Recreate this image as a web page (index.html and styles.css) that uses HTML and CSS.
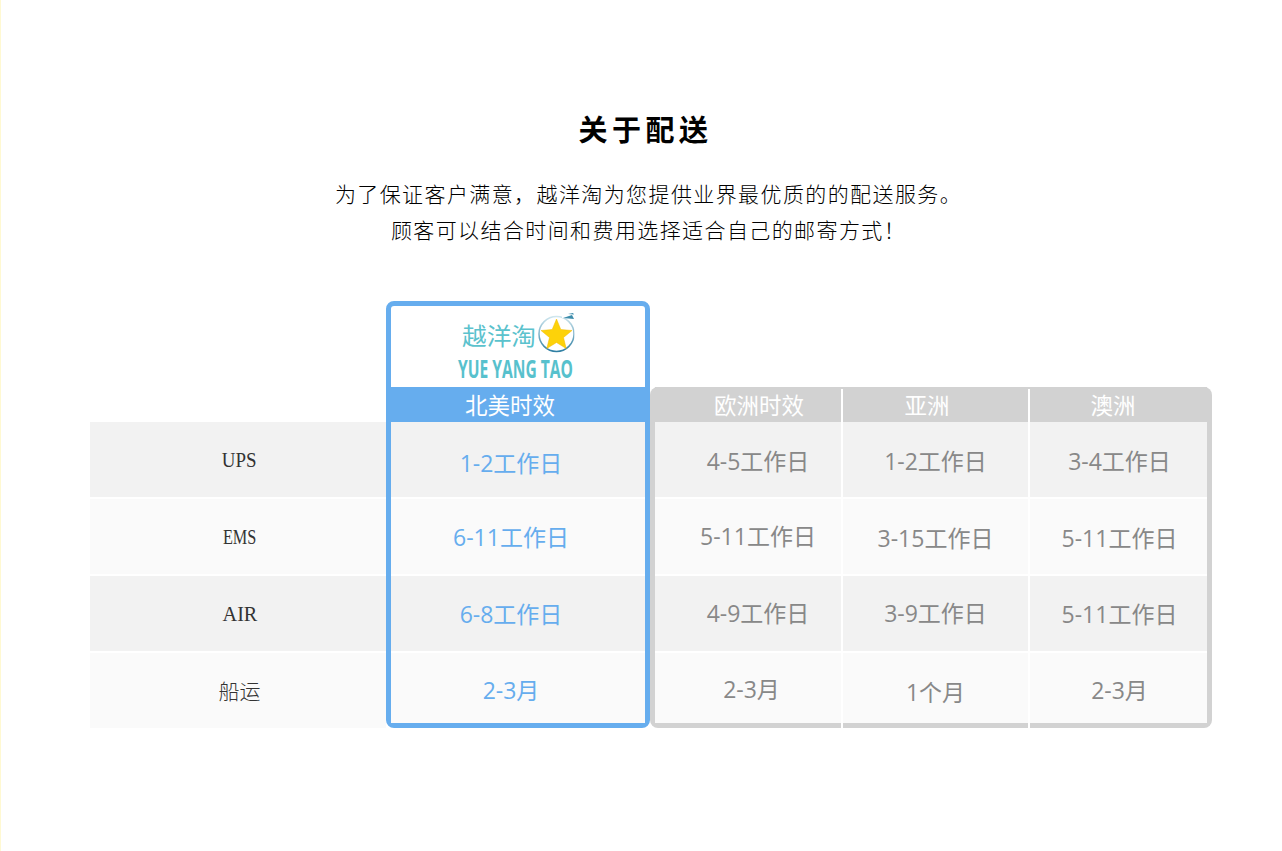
FILE: index.html
```html
<!DOCTYPE html>
<html lang="zh-CN">
<head>
<meta charset="utf-8">
<title>关于配送</title>
<link rel="stylesheet" href="styles.css">
</head>
<body>
<main class="page">
  <h1 class="title">关于配送</h1>
  <p class="intro">为了保证客户满意，越洋淘为您提供业界最优质的的配送服务。<br>顾客可以结合时间和费用选择适合自己的邮寄方式！</p>
  <section class="compare">
    <div class="labels">
      <div class="label odd"><span class="latin latin-ups">UPS</span></div>
      <div class="label even"><span class="latin latin-ems">EMS</span></div>
      <div class="label odd"><span class="latin latin-air">AIR</span></div>
      <div class="label even cjk">船运</div>
    </div>
    <div class="featured">
      <div class="logo">
        <svg width="195" height="76" viewBox="0 0 195 76" class="logo-svg">
          <defs>
            <linearGradient id="ring" x1="0" y1="0" x2="0" y2="1">
              <stop offset="0" stop-color="#cfe6ee"/>
              <stop offset="1" stop-color="#2f7fa3"/>
            </linearGradient>
          </defs>
          <text x="12" y="38" class="logo-cn" textLength="74" lengthAdjust="spacingAndGlyphs">越洋淘</text>
          <circle cx="106.500" cy="27" r="17.500" fill="#fff" stroke="url(#ring)" stroke-width="1.500"/>
          <polygon points="106.500,12 110.800,22.500 122,23.500 113.500,30.500 116.200,41.500 106.500,35.500 96.800,41.500 99.500,30.500 91,23.500 102.200,22.500" fill="#fdd20a" stroke="#f3b800" stroke-width="0.500"/>
          <rect x="112" y="4" width="14" height="7" fill="#fff"/>
          <path d="M113 11 L122 8 L124 12 Z M118 7 L123 6 L124 7.500 Z" fill="#3d8cab"/>
          <rect x="124.500" y="4" width="6" height="46" fill="#fff"/>
          <text x="8" y="71" class="logo-en" textLength="115" lengthAdjust="spacingAndGlyphs">YUE YANG TAO</text>
        </svg>
      </div>
      <div class="head head-blue">北美时效</div>
      <div class="cell odd blue down2">1-2工作日</div>
      <div class="cell even blue up1">6-11工作日</div>
      <div class="cell odd blue up1">6-8工作日</div>
      <div class="cell even blue last down1">2-3月</div>
    </div>
    <div class="others">
      <div class="col col-a">
        <div class="head">欧洲时效</div>
        <div class="cell odd">4-5工作日</div>
        <div class="cell even up2">5-11工作日</div>
        <div class="cell odd up2">4-9工作日</div>
        <div class="cell even last shift-left">2-3月</div>
      </div>
      <div class="col col-b">
        <div class="head">亚洲</div>
        <div class="cell odd">1-2工作日</div>
        <div class="cell even">3-15工作日</div>
        <div class="cell odd up2">3-9工作日</div>
        <div class="cell even last down3">1个月</div>
      </div>
      <div class="col col-c">
        <div class="head">澳洲</div>
        <div class="cell odd">3-4工作日</div>
        <div class="cell even">5-11工作日</div>
        <div class="cell odd up1">5-11工作日</div>
        <div class="cell even last down1">2-3月</div>
      </div>
    </div>
  </section>
</main>
</body>
</html>
```
FILE: styles.css
```css
* { box-sizing: border-box; }
html, body { margin: 0; padding: 0; background: #fff; }
body {
  min-height: 851px;
  border-left: 1px solid #fff9d2;
  font-family: "Open Sans", "Noto Sans CJK SC", sans-serif;
}
.page { padding-top: 109px; }
.title {
  margin: 0;
  padding-left: 8px;
  text-align: center;
  font-size: 29px;
  line-height: 38px;
  font-weight: 700;
  letter-spacing: 4.500px;
  color: #000;
  font-family: "Noto Sans CJK SC", sans-serif;
}
.intro {
  margin: 28px 0 0;
  padding-left: 14px;
  text-align: center;
  font-size: 21px;
  line-height: 36px;
  letter-spacing: 1.400px;
  color: #000;
  font-family: "Noto Sans CJK SC", sans-serif;
  font-weight: 300;
}
.compare {
  display: flex;
  align-items: flex-start;
  margin: 54px 0 0 89px;
  width: 1122px;
}
.labels {
  width: 296px;
  margin-top: 121px;
  display: flex;
  flex-direction: column;
  gap: 2px;
}
.label {
  height: 75px;
  display: flex;
  align-items: center;
  justify-content: center;
  padding-left: 3px;
  font-family: "Liberation Serif", serif;
  font-size: 22px;
  color: #333;
}
.latin { display: inline-block; }
.latin-ups { transform: scaleX(0.86); }
.latin-ems { transform: scaleX(0.74); }
.latin-air { transform: scaleX(0.92); }
.label.cjk {
  font-family: "Noto Sans CJK SC", sans-serif;
  font-size: 21px;
  font-weight: 300;
  padding-left: 3px;
  padding-bottom: 2px;
}
.odd { background: #f2f2f2; }
.even { background: #fafafa; }
.featured {
  width: 264px;
  height: 427px;
  border: 5px solid #66adee;
  border-radius: 8px;
  display: flex;
  flex-direction: column;
  gap: 2px;
  background: #fff;
}
.logo {
  height: 81px;
  margin-bottom: -2px;
  display: flex;
  justify-content: flex-start;
}
.logo-svg { margin: 1px 0 0 58.500px; }
.logo-cn {
  font-family: "Noto Sans CJK SC", sans-serif;
  font-size: 24px;
  fill: #5bc2cd;
}
.logo-en {
  font-family: "Open Sans", sans-serif;
  font-size: 25px;
  font-weight: 700;
  fill: #57c1cd;
}
.head {
  height: 35px;
  flex: none;
  margin-bottom: -2px;
  display: flex;
  align-items: center;
  justify-content: center;
  font-size: 22.500px;
  color: #fff;
}
.head-blue { background: #66adee; padding-right: 16px; }
.others {
  width: 562px;
  height: 341px;
  margin-top: 86px;
  padding: 0 5px 5px;
  background: #d2d2d2;
  border-radius: 8px;
  display: flex;
  gap: 2px;
}
.col {
  position: relative;
  display: flex;
  flex-direction: column;
  gap: 2px;
  background: linear-gradient(#d2d2d2 35px, #fff 35px);
}
.col-a { width: 186px; }
.col-b { width: 185px; }
.col-c { width: 177px; }
.col-a::after, .col-b::after {
  content: "";
  position: absolute;
  top: 2px;
  bottom: -5px;
  right: -2px;
  width: 2px;
  background: #fff;
}
.cell {
  height: 75px;
  flex: none;
  display: flex;
  align-items: center;
  justify-content: center;
  font-size: 23px;
  color: #888;
}
.cell.last { height: 70px; }
.col-a .cell { padding-left: 20px; }
.col-a .cell.shift-left { padding-left: 7px; }
.col-a .head { padding-left: 22px; }
.col-b .head { padding-right: 17px; }
.col-c .head { padding-right: 11px; }
.col-c .cell { padding-left: 2px; }
.blue { color: #66adee; padding-right: 14px; }
.down1 { padding-top: 2px; }
.down2 { padding-top: 4px; }
.down3 { padding-top: 6px; }
.up1 { padding-bottom: 2px; }
.up2 { padding-bottom: 4px; }
```
